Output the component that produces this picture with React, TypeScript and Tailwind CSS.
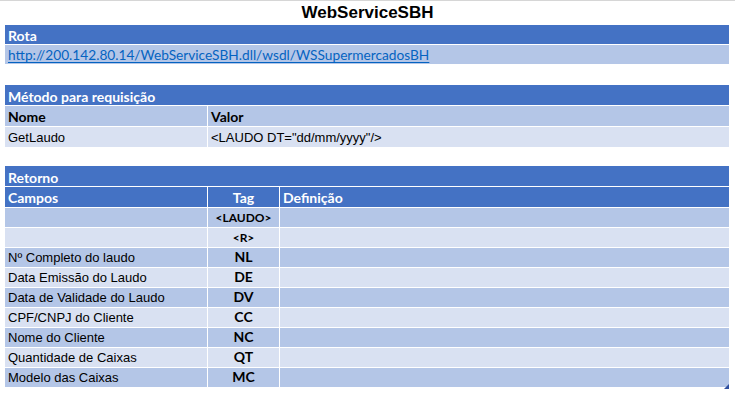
const calibri = "font-['Lato','Open_Sans',sans-serif]";
const arial = "font-['Liberation_Sans',Arial,sans-serif]";

const campos: [string, string, boolean][] = [
  ["", "<LAUDO>", true],
  ["", "<R>", true],
  ["Nº Completo do laudo", "NL", false],
  ["Data Emissão do Laudo", "DE", false],
  ["Data de Validade do Laudo", "DV", false],
  ["CPF/CNPJ do Cliente", "CC", false],
  ["Nome do Cliente", "NC", false],
  ["Quantidade de Caixas", "QT", false],
  ["Modelo das Caixas", "MC", false],
];

function Header({ children, h = "h-[21px]" }: { children: React.ReactNode; h?: string }) {
  return (
    <div
      className={`${h} flex items-end px-[3px] pb-[1px] bg-[#4472c4] border-b border-white text-white text-[14px] font-bold leading-none ${calibri}`}
    >
      {children}
    </div>
  );
}

export default function App() {
  return (
    <div className="w-[735px] h-[394px] bg-white relative overflow-hidden">
      <div className="h-px bg-[#d6d6d6]" />
      <div className={`h-[24px] flex items-center justify-center text-[17px] font-bold text-black ${arial}`}>
        WebServiceSBH
      </div>

      <div className="ml-[5px] w-[724px]">
        <Header h="h-[20px]">Rota</Header>
        <div className="h-[20px] flex items-end px-[3px] pb-[2px] bg-[#b4c6e7] border-b border-white">
          <a
            href="#"
            className={`text-[13.7px] leading-none text-[#0563c1] underline underline-offset-2 ${calibri}`}
          >
            http://200.142.80.14/WebServiceSBH.dll/wsdl/WSSupermercadosBH
          </a>
        </div>

        <div className="h-[20px]" />

        <Header>Método para requisição</Header>
        <div className={`h-[21px] flex bg-[#b4c6e7] border-b border-white text-[14px] font-bold leading-none text-black ${calibri}`}>
          <div className="w-[203px] flex items-end px-[3px] pb-[2px] border-r border-white">Nome</div>
          <div className="flex-1 flex items-end px-[3px] pb-[2px]">Valor</div>
        </div>
        <div className={`h-[20px] flex bg-[#d9e1f2] text-[13px] leading-none text-black ${arial}`}>
          <div className="w-[203px] flex items-end px-[3px] pb-[3px] border-r border-white">GetLaudo</div>
          <div className="flex-1 flex items-end px-[3px] pb-[3px]">{'<LAUDO DT="dd/mm/yyyy"/>'}</div>
        </div>

        <div className="h-[19px]" />

        <Header>Retorno</Header>
        <div className={`h-[21px] flex bg-[#4472c4] border-b border-white text-white text-[14px] font-bold leading-none ${calibri}`}>
          <div className="w-[203px] flex items-end px-[3px] pb-[2px] border-r border-white">Campos</div>
          <div className="w-[72px] flex items-end justify-center pb-[2px] border-r border-white">Tag</div>
          <div className="flex-1 flex items-end px-[3px] pb-[2px]">Definição</div>
        </div>
        {campos.map(([nome, tag, small], i) => (
          <div
            key={tag}
            className={`h-[20px] flex border-b border-white text-black ${i % 2 === 0 ? "bg-[#b4c6e7]" : "bg-[#d9e1f2]"}`}
          >
            <div className={`w-[203px] flex items-end px-[3px] pb-[3px] border-r border-white text-[13px] leading-none ${arial}`}>
              {nome}
            </div>
            <div
              className={`w-[72px] flex items-end justify-center pb-[3px] border-r border-white font-bold leading-none ${small ? "text-[12px]" : "text-[14px]"} ${calibri}`}
            >
              {tag}
            </div>
            <div className="flex-1" />
          </div>
        ))}
      </div>

      <div className="absolute left-[724px] top-[384px] w-0 h-0 border-l-[5px] border-l-transparent border-b-[5px] border-b-[#2f4f9f]" />
    </div>
  );
}
